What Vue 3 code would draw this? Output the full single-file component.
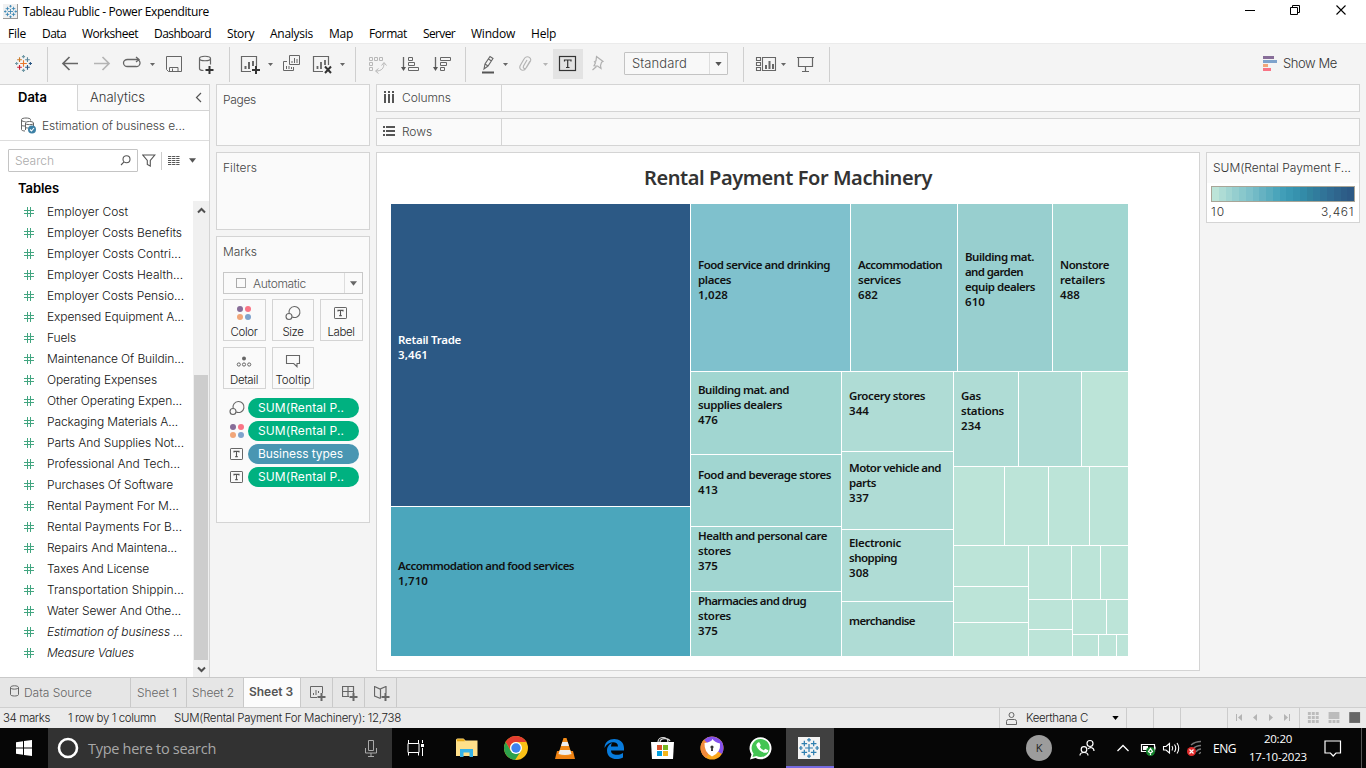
<script setup>
const vFit = {
  mounted(el, { value }) {
    if (!value) return
    const natural = el.getBoundingClientRect().width
    const count = el.textContent.trim().length
    el.style.letterSpacing = `${(value - natural) / count}px`
  },
}

const menus = [
  ['File', 18], ['Data', 24], ['Worksheet', 56], ['Dashboard', 57], ['Story', 27], ['Analysis', 43],
  ['Map', 24], ['Format', 38], ['Server', 32], ['Window', 44], ['Help', 25],
]

const fields = [
  ['Employer Cost', 81], ['Employer Costs Benefits', 135], ['Employer Costs Contri...', 134],
  ['Employer Costs Health...', 136], ['Employer Costs Pensio...', 137], ['Expensed Equipment A...', 137],
  ['Fuels', 29], ['Maintenance Of Buildin...', 137], ['Operating Expenses', 110], ['Other Operating Expen...', 135],
  ['Packaging Materials A...', 131], ['Parts And Supplies Not...', 137], ['Professional And Tech...', 133],
  ['Purchases Of Software', 126], ['Rental Payment For M...', 132], ['Rental Payments For B...', 135],
  ['Repairs And Maintena...', 130], ['Taxes And License', 102], ['Transportation Shippin...', 137],
  ['Water Sewer And Othe...', 134], ['Estimation of business ...', 136, true], ['Measure Values', 87, true],
]

const buttons = [
  ['Color', 27, 'color'], ['Size', 21, 'size'], ['Label', 27, 'label'], ['Detail', 28, 'detail'], ['Tooltip', 35, 'tooltip'],
]
const pills = [
  ['SUM(Rental P..', 86, 'size', 'green'], ['SUM(Rental P..', 86, 'color', 'green'],
  ['Business types', 85, 'label', 'blue'], ['SUM(Rental P..', 86, 'label', 'green'],
]

// left, top, right, bottom, fill, label offset, label lines
const tiles = [
  [0, 0, 300, 303, '#2c5985', 128, [['Retail Trade', 63], ['3,461', 30]], true],
  [0, 303, 300, 453, '#4ba6bc', 51, [['Accommodation and food services', 176], ['1,710', 30]]],
  [300, 0, 460, 168, '#7fc1cd', 53, [['Food service and drinking', 132], ['places', 33], ['1,028', 30]]],
  [460, 0, 567, 168, '#92cccf', 53, [['Accommodation', 84], ['services', 43], ['682', 20]]],
  [567, 0, 662, 168, '#98cfcf', 45, [['Building mat.', 69], ['and garden', 58], ['equip dealers', 70], ['610', 20]]],
  [662, 0, 738, 168, '#a1d6d1', 53, [['Nonstore', 49], ['retailers', 45], ['488', 20]]],
  [300, 168, 451, 251, '#a1d6d1', 10, [['Building mat. and', 91], ['supplies dealers', 84], ['476', 20]]],
  [300, 251, 451, 323, '#a1d6d1', 12, [['Food and beverage stores', 133], ['413', 20]]],
  [300, 323, 451, 388, '#a1d6d1', 1, [['Health and personal care', 129], ['stores', 33], ['375', 20]]],
  [300, 388, 451, 453, '#a1d6d1', 1, [['Pharmacies and drug', 108], ['stores', 33], ['375', 20]]],
  [451, 168, 563, 248, '#afdcd5', 16, [['Grocery stores', 76], ['344', 20]]],
  [451, 248, 563, 326, '#afdcd5', 8, [['Motor vehicle and', 92], ['parts', 27], ['337', 20]]],
  [451, 326, 563, 398, '#afdcd5', 5, [['Electronic', 52], ['shopping', 48], ['308', 20]]],
  [451, 398, 563, 453, '#afdcd5', 11, [['merchandise', 66]]],
  [563, 168, 628, 263, '#afdcd5', 16, [['Gas', 20], ['stations', 43], ['234', 20]]],
  [628, 168, 691, 263, '#afdcd5'],
  [691, 168, 738, 263], [563, 263, 614, 342], [614, 263, 658, 342], [658, 263, 699, 342], [699, 263, 738, 342],
  [563, 342, 638, 383], [563, 383, 638, 419], [563, 419, 638, 453],
  [638, 342, 681, 396], [681, 342, 710, 396], [710, 342, 738, 396],
  [638, 396, 682, 426], [638, 426, 682, 453],
  [682, 396, 716, 431], [716, 396, 738, 431],
  [682, 431, 708, 453], [708, 431, 726, 453], [726, 431, 738, 453],
]
const linesOf = (a, b) => [...new Set(tiles.flatMap((t) => [t[a], t[b]]))].sort((p, q) => p - q)
const xs = linesOf(0, 2)
const ys = linesOf(1, 3)
const tracks = (l) => l.slice(1).map((v, i) => `${v - l[i]}px`).join(' ')
const mapStyle = { gridTemplateColumns: tracks(xs), gridTemplateRows: tracks(ys) }
const tileStyle = (t) => ({
  gridColumn: `${xs.indexOf(t[0]) + 1} / ${xs.indexOf(t[2]) + 1}`,
  gridRow: `${ys.indexOf(t[1]) + 1} / ${ys.indexOf(t[3]) + 1}`,
  backgroundColor: t[4] || '#bce4d8',
  paddingTop: `${t[5] || 0}px`,
})

const ramp = ['#bce4d8', '#aedcd5', '#a1d5d2', '#95cecf', '#89c8cc', '#7ec1ca', '#72bac6', '#66b2c2', '#59acbe', '#4ba5bb',
  '#419eb8', '#3a98b3', '#3692ae', '#338ba8', '#32839f', '#317c9d', '#317498', '#306c93', '#2f658d', '#2d5e88', '#2c5985']
</script>

<template>
  <div class="window">
    <svg class="defs" width="0" height="0">
      <symbol id="i-color" viewBox="0 0 16 16">
        <circle cx="4" cy="4" r="3" fill="#876d98" /><circle cx="12" cy="4" r="3" fill="#f97485" />
        <circle cx="4" cy="12" r="3" fill="#f1a679" /><circle cx="12" cy="12" r="3" fill="#7fa3cc" />
      </symbol>
      <symbol id="i-size" viewBox="0 0 16 16">
        <g fill="none" stroke="#666" stroke-width="1.1"><path d="M4.2 8.5A5.5 5.5 0 1 1 7.2 12" /><circle cx="4" cy="11.5" r="3" /></g>
      </symbol>
      <symbol id="i-label" viewBox="0 0 16 16">
        <rect x="1.5" y="2.5" width="12" height="11" rx=".6" fill="none" stroke="#666" />
        <path d="M5 6.6V5.4h5v1.2M7.5 5.5v5M6.2 10.6h2.6" fill="none" stroke="#555" stroke-width="1.1" />
      </symbol>
      <symbol id="i-detail" viewBox="0 0 16 16">
        <circle cx="8" cy="5.5" r="2" fill="#666" /><g fill="none" stroke="#666"><circle cx="2.8" cy="11.5" r="1.6" /><circle cx="8" cy="11.5" r="1.6" /><circle cx="13.2" cy="11.5" r="1.6" /></g>
      </symbol>
      <symbol id="i-tooltip" viewBox="0 0 16 16">
        <path d="M1.5 2.5h13v8h-2.5v3.2l-3.3-3.2H1.5z" fill="none" stroke="#666" stroke-width="1.1" />
      </symbol>
      <symbol id="i-hash" viewBox="0 0 12 12">
        <path d="M4.500 1v10M7.500 1v10M1 4.500h10M1 7.500h10" stroke="#42a580" />
      </symbol>
      <symbol id="i-down" viewBox="0 0 8 5"><path d="M0 0h8L4 5z" /></symbol>
      <symbol id="i-tableau" viewBox="0 0 18 18">
        <path class="c1" d="M9 5.5v7M5.5 9h7" /><path class="c2" d="M4.8 2.5v5M2.3 5h5" /><path class="c3" d="M13.2 10.5v5M10.7 13h5" />
        <path class="c4" d="M13.2 2.5v5M10.7 5h5" /><path class="c5" d="M4.8 10.5v5M2.3 13h5" />
        <path class="c6" d="M9 0v3.4M7.3 1.7h3.4M9 14.6V18M7.3 16.3h3.4M1.7 7.3v3.4M0 9h3.4" /><path class="c3" d="M16.3 7.3v3.4M14.6 9H18" />
      </symbol>
    </svg>

    <header class="title">
      <span class="appicon"><svg class="mono" width="13" height="13"><use href="#i-tableau" /></svg></span>
      <span v-fit="186">Tableau Public - Power Expenditure</span>
      <svg class="controls" width="110" height="22" viewBox="1240 0 110 22" fill="none" stroke="#000">
        <path d="M1245 10.5h10M1290.5 7.5h7v7h-7zM1292.500 7.500v-2h7v7h-2" /><path d="M1336.500 5.500l9 9M1345.500 5.500l-9 9" stroke-width="1.100" />
      </svg>
    </header>

    <nav class="menu"><span v-for="m in menus" :key="m[0]" v-fit="m[1]">{{ m[0] }}</span></nav>

    <div class="toolbar">
      <span class="logo"><svg class="multi" width="17" height="17"><use href="#i-tableau" /></svg></span>
      <i class="sep"></i>
      <svg width="181" height="41" viewBox="48 43 181 41" fill="none" stroke="#666">
        <path d="M78 63.500H63M69.500 57l-6.500 6.500 6.500 6.500" stroke-width="1.700" />
        <path d="M94 63.500h15M102.500 57l6.500 6.500-6.500 6.500" stroke="#b4b4b4" stroke-width="1.700" />
        <path d="M133 59.500h-5.500a4 3.500 0 0 0 0 7h8.500a3.500 3.500 0 0 0 1-7M131 59.500h7M136 57l3 2.500-3 2.500" stroke-width="1.300" />
        <path d="M150 63h5l-2.500 3z" fill="#666" stroke="none" />
        <path d="M166.500 56.500h15v15h-13l-2-2zM169.500 71.500v-4h8.500v4M172.500 71v-2.500" />
        <path d="M199.500 58.500v10c0 1.500 2 2 4 2M210.500 58.500v6M199.500 58.500c0-3 11-3 11 0s-11 3-11 0" stroke-width="1.200" />
        <path d="M209.500 66v8M205.500 70h8" stroke="#333" stroke-width="2" />
      </svg>
      <i class="sep"></i>
      <svg width="125" height="41" viewBox="230 43 125 41" fill="none" stroke="#666">
        <path d="M251 71.500h-9.500v-15h15V66" stroke-width="1.200" /><path d="M245.500 69v-3M249 69v-7M253 66v-5" stroke-width="2" />
        <path d="M256 66v8M252 70h8" stroke="#333" stroke-width="2" /><path d="M268 63h5l-2.500 3zM340 63h5l-2.500 3z" fill="#666" stroke="none" />
        <path d="M289.500 55.500h10v9h-10zM287 61.500h-3.500v9h10V67M292 63v-2M294.500 63v-5M297 63v-4M286.500 69v-3M289 69v-3M291.500 69v-2" />
        <path d="M323 71.500h-9.500v-15h15V65" stroke-width="1.200" /><path d="M317.500 69v-3M321 69v-7M325 65v-5" stroke-width="1.800" />
        <path d="M325 66.500l6 6.500M331 66.500l-6 6.500" stroke="#333" stroke-width="2" />
      </svg>
      <i class="sep"></i>
      <svg width="109" height="41" viewBox="356 43 109 41" fill="none" stroke="#666">
        <path d="M369.500 57.500h3v3h-3zM374.500 57.500h3v3h-3zM379.500 57.500h3v3h-3zM369.500 62.500h3v3h-3zM369.500 67.500h3v3h-3zM384 63c0 5-2 8-8 8M381.500 65.500l2.500-3 2.500 3M378.500 68.500l-3 2.500 3 2.500" stroke="#b8b8b8" />
        <path d="M403.500 57v12M435.500 57v12" stroke-width="1.300" /><path d="M401 67h5l-2.500 4zM433 67h5l-2.500 4z" fill="#555" stroke="none" />
        <path d="M408.500 57.500h4v3h-4zM408.500 62.500h6v3h-6zM408.500 67.500h10v3h-10zM440.500 57.500h10v3h-10zM440.500 62.500h6v3h-6zM440.500 67.500h4v3h-4z" />
      </svg>
      <i class="sep"></i>
      <div class="tseg">
        <svg width="158" height="41" viewBox="466 43 158 41" fill="none" stroke="#666">
          <rect x="553" y="49" width="30" height="30" fill="#e3e3e3" stroke="none" />
          <path d="M484 69l1-5 5-7.500 3 2-5 7.500zM485 64l3 2M488.500 59l3 2" stroke-width="1.100" /><path d="M482 72.500h12" stroke-width="2" stroke="#555" />
          <path d="M503 63h5l-2.500 3z" fill="#666" stroke="none" /><path d="M543 63h5l-2.500 3z" fill="#b5b5b5" stroke="none" />
          <path d="M530 61l-4 7c-2 4-7.500 2-6-2l4-7c2-4 8-2 6.500 2l-4 6.500c-1.500 2-4 1-3-1.500l3.500-6" stroke="#b5b5b5" stroke-width="1.200" />
          <rect x="559.500" y="56.500" width="16" height="14" stroke="#333" stroke-width="1.200" />
          <path d="M564.500 61.500v-1.500h6.500v1.500M567.700 60v7.500M566 67.500h3.500" stroke="#333" stroke-width="1.200" />
          <path d="M596.500 56.500l6.500 5-1.500.8-1 3.200.5 3-3.500-2.500-3.500-.2 1.500-3-1-1 1.500-1zM596.500 66.500l-4 3.500" stroke="#b0b0b0" stroke-width="1.200" />
        </svg>
        <div class="fitbox"><span v-fit="55">Standard</span><b><svg width="7" height="4" fill="#555"><use href="#i-down" /></svg></b></div>
      </div>
      <i class="sep"></i>
      <svg width="85" height="41" viewBox="744 43 85 41" fill="none" stroke="#666">
        <path d="M756.500 57.500h4v3h-4zM756.500 62.500h4v3h-4zM756.500 67.500h4v3h-4zM762.500 57.500h13v13h-13z" stroke-width="1.100" />
        <path d="M766 69v-4M769.500 69v-8M773 69v-5" stroke-width="2" /><path d="M781 63h5l-2.500 3z" fill="#666" stroke="none" />
        <path d="M797 57.500h17M798.500 58v8.500h14V58M805.500 66.500v5M802 71.500h7" stroke-width="1.200" />
      </svg>
      <i class="sep"></i>
      <div class="showme">
        <svg width="14" height="15"><path d="M0 0h11v3H0z" fill="#876d98" /><path d="M0 4h14v3H0z" fill="#7fa3cc" /><path d="M0 8h5v3H0z" fill="#f1a679" /><path d="M0 12h8v3H0z" fill="#f97485" /></svg>
        <span v-fit="54">Show Me</span>
      </div>
    </div>

    <main class="main">
      <aside class="side">
        <div class="sidetabs">
          <div class="on"><span v-fit="29">Data</span></div>
          <div class="off"><span v-fit="55">Analytics</span><svg width="7" height="11" fill="none" stroke="#555" stroke-width="1.200"><path d="M6 1L1.500 5.500 6 10" /></svg></div>
        </div>
        <div class="source">
          <svg width="17" height="17" fill="none" stroke="#666">
            <path d="M1.500 12.500v-10c0-2 9-2 9 0v1M1.500 3c0 1.500 3 1.700 4 1.500M1.500 12.500c0 1 2 1.500 3.500 1.500M5.500 13V6c0-2 8-2 8 0v3M5.500 6.500c0 1.500 8 1.500 8 0M1.500 8c0 1 2 1 4 1M5.500 10c0 1 2 1 3 1" /><circle cx="12" cy="12.500" r="4" fill="#3c80a5" stroke="none" /><path d="M10 12.500l1.500 1.500 2.500-3" stroke="#fff" stroke-width="1.100" />
          </svg>
          <span v-fit="143">Estimation of business e...</span>
        </div>
        <div class="find">
          <div class="input"><span v-fit="39">Search</span><svg width="11" height="11" fill="none" stroke="#555" stroke-width="1.100"><circle cx="6.500" cy="4.200" r="3.500" /><path d="M4 6.800L1 10" /></svg></div>
          <svg width="14" height="13" fill="none" stroke="#555" stroke-width="1.100"><path d="M.8 1h12L8.300 6.500V12l-3-1.500v-4z" /></svg>
          <i></i>
          <svg width="12" height="10" stroke="#555"><path d="M0 .5h12M0 2.500h12M0 4.500h12M0 6.500h12M0 8.500h12" stroke-dasharray="3.300 .8" /></svg>
          <svg class="dn" width="7" height="5" fill="#555"><use href="#i-down" /></svg>
        </div>
        <h3 class="tables"><span v-fit="41">Tables</span></h3>
        <div class="list">
          <div class="fields">
            <div v-for="f in fields" :key="f[0]" class="field" :class="{ em: f[2] }"><svg width="12" height="12"><use href="#i-hash" /></svg><span v-fit="f[1]">{{ f[0] }}</span></div>
          </div>
          <div class="scroll">
            <svg width="9" height="7" fill="none" stroke="#505050" stroke-width="2"><path d="M1 5.500L4.500 2 8 5.500" /></svg>
            <i></i>
            <svg width="9" height="7" fill="none" stroke="#505050" stroke-width="2"><path d="M1 1.500L4.500 5 8 1.500" /></svg>
          </div>
        </div>
      </aside>

      <section class="cards">
        <div class="card pages"><span v-fit="33">Pages</span></div>
        <div class="card filters"><span v-fit="34">Filters</span></div>
        <div class="card marks">
          <span v-fit="34">Marks</span>
          <div class="auto"><em></em><span v-fit="53">Automatic</span><b><svg width="7" height="5" fill="#666"><use href="#i-down" /></svg></b></div>
          <div class="grid">
            <div v-for="b in buttons" :key="b[0]" class="btn"><svg width="16" height="16"><use :href="'#i-' + b[2]" /></svg><span v-fit="b[1]">{{ b[0] }}</span></div>
          </div>
          <div class="pills">
            <div v-for="(p, i) in pills" :key="i" class="pillrow"><svg width="16" height="16"><use :href="'#i-' + p[2]" /></svg><div class="pill" :class="p[3]"><span v-fit="p[1]">{{ p[0] }}</span></div></div>
          </div>
        </div>
      </section>

      <section class="work">
        <div class="shelf"><label><svg width="12" height="12" fill="#555"><path d="M1 0h2v2H1zM5 0h2v2H5zM9 0h2v2H9zM1 3h2v9H1zM5 3h2v9H5zM9 3h2v9H9z" /></svg><span v-fit="49">Columns</span></label></div>
        <div class="shelf"><label><svg width="12" height="12" fill="#555"><path d="M0 1h2v2H0zM0 5h2v2H0zM0 9h2v2H0zM3 1h9v2H3zM3 5h9v2H3zM3 9h9v2H3z" /></svg><span v-fit="30">Rows</span></label></div>
        <div class="viewrow">
          <article class="view">
            <h1><span v-fit="288">Rental Payment For Machinery</span></h1>
            <div class="treemap" :style="mapStyle">
              <div v-for="(t, i) in tiles" :key="i" class="tile" :class="{ light: t[7] }" :style="tileStyle(t)">
                <div v-for="(l, j) in t[6]" :key="j" class="line"><span v-fit="l[1]">{{ l[0] }}</span></div>
              </div>
            </div>
          </article>
          <div class="legend">
            <div class="lt"><span v-fit="138">SUM(Rental Payment F...</span></div>
            <div class="ramp"><i v-for="c in ramp" :key="c" :style="{ backgroundColor: c }"></i></div>
            <div class="ends"><span v-fit="14">10</span><span v-fit="33">3,461</span></div>
          </div>
        </div>
      </section>
    </main>

    <div class="tabs">
      <div class="tab ds"><svg width="9" height="12" fill="none" stroke="#666"><path d="M.5 2.500v7c0 2 8 2 8 0v-7c0-2.300-8-2.300-8 0s8 2 8 0" /></svg><span v-fit="68">Data Source</span></div>
      <div class="tab"><span v-fit="40">Sheet 1</span></div>
      <div class="tab second"><span v-fit="42">Sheet 2</span></div>
      <div class="tab cur"><span v-fit="44">Sheet 3</span></div>
      <div class="tab ic"><svg width="16" height="16" fill="none" stroke="#666"><path d="M7 11.500H.5V.5h12V7M3.500 9V7M6 9V4M8.500 7V5" /><path d="M11.500 7v8M7.500 11h8" stroke-width="2" /></svg></div>
      <div class="tab ic"><svg width="16" height="16" fill="none" stroke="#666"><path d="M7 10.500H.5V.5h11V7M.5 5.500h11M6 .5v10" stroke-width="1.200" /><path d="M11.500 7v8M7.500 11h8" stroke-width="2" /></svg></div>
      <div class="tab ic"><svg width="16" height="16" fill="none" stroke="#666"><path d="M6.500 12.500L.5 10V.5L6 3 12 .5V7M6.500 3v9.500" stroke-width="1.200" /><path d="M11.500 7v8M7.500 11h8" stroke-width="2" /></svg></div>
    </div>

    <footer class="status">
      <span v-fit="47">34 marks</span><span v-fit="88">1 row by 1 column</span><span v-fit="227">SUM(Rental Payment For Machinery): 12,738</span>
      <div class="user"><svg width="11" height="13" fill="none" stroke="#666"><circle cx="5.500" cy="3" r="2.500" /><path d="M.5 12.500v-3q0-2 2-2h6q2 0 2 2v3z" /></svg><span v-fit="62">Keerthana C</span><svg width="7" height="4" fill="#000"><use href="#i-down" /></svg></div>
      <i></i><i></i><i class="wide"></i>
      <svg width="71" height="20" viewBox="1228 708 71 20" fill="#b4b4b4"><path d="M1236 714h1v7h-1zM1242 714v7l-4-3.500zM1257 714v7l-4-3.500zM1269 714v7l4-3.500zM1284 714v7l4-3.500zM1289 714h1v7h-1z" /></svg>
      <svg class="modes" width="67" height="20" viewBox="1299 708 67 20" fill="#bcbcbc">
        <path d="M1307 712h3v3h-3zM1311 712h3v3h-3zM1315 712h3v3h-3zM1307 716h3v3h-3zM1311 716h3v3h-3zM1315 716h3v3h-3zM1307 720h3v3h-3zM1311 720h3v3h-3zM1315 720h3v3h-3zM1328 712h11v7h-11zM1328 720h3v3h-3zM1332 720h3v3h-3zM1336 720h3v3h-3z" /><path d="M1349 712h11v11h-11z" fill="#666" />
      </svg>
    </footer>

    <div class="taskbar">
      <div class="start"><svg width="17" height="16" fill="#fff"><path d="M0 2.300L7 1.300v6.200H0zM8 1.100L16 0v7.500H8zM0 8.500h7v6.200l-7-1zM8 8.500h8V16l-8-1.100z" /></svg></div>
      <div class="cortana">
        <svg width="22" height="22" fill="none" stroke="#fff" stroke-width="2.600"><circle cx="11" cy="11" r="9" /></svg>
        <span v-fit="128">Type here to search</span>
        <svg width="12" height="17" fill="none" stroke="#aaa"><path d="M3.500 .5h5v10h-5zM.5 8v5h11V8M6 13v3.500M3 16.500h6" /></svg>
      </div>
      <svg width="394" height="40" viewBox="392 728 394 40" fill="none">
        <path d="M408 743.500h11M408.500 740v3.500M418.500 740v3.500M408 752.500h11v-9h-11zM408.500 752.500v3M418.500 752.500v3M422.500 740v3M422.500 748v8" stroke="#fff" /><path d="M421 744h3v3h-3z" fill="#fff" />
        <path d="M456 740q0-1.500 1.500-1.500h6l2 2h12V756h-21.500z" fill="#ffe08a" /><path d="M457 739.300h7l1 2h-8z" fill="#e6a817" /><path d="M460 757v-8h13v8h-3.500v-4.500h-6V757z" fill="#35b3e8" />
        <circle cx="516" cy="748" r="12" fill="#fbc116" /><path d="M505.600 742A12 12 0 0 1 526.400 742H516a6 6 0 0 0-5.200 9z" fill="#e23c30" /><path d="M505.600 742A12 12 0 0 0 515 760l6-9-5 3-5.200-3z" fill="#2da14c" /><circle cx="516" cy="748" r="6" fill="#fff" /><circle cx="516" cy="748" r="4.700" fill="#3c83ef" />
        <path d="M557 751h16l2 8h-20z" fill="#ee8112" /><path d="M563.500 738h3L572 755q-7 2.500-14 0z" fill="#f28a17" /><path d="M562.300 742h5.400l1.300 4h-8zM559.800 750h10.400l1.300 4q-6.500 2-13 0z" fill="#eee" />
        <path d="M604.500 748c0-12 19.500-12 19.500 0v2.500h-13c0 5 7.500 5.500 12 2.500v4.500c-7 3.500-16 1-16-7 0-4 2.500-6.500 5-7.500q-1 1.500-1 3.500h7c0-5.500-9-6-13.500 1.500z" fill="#087bdc" />
        <path d="M651 742h23l-1 17h-21z" fill="#fff" /><path d="M658 742c0-6 10-6 10 0M660 742c0-3.500 8-5 10-1" stroke="#ddd" stroke-width="1.200" /><path d="M657 745h5v5h-5z" fill="#d8532c" /><path d="M663 745h5v5h-5z" fill="#79b622" /><path d="M657 751h5v5h-5z" fill="#00a0e0" /><path d="M663 751h5v5h-5z" fill="#f5b51a" />
        <circle cx="712" cy="748" r="11.500" fill="#f9a51b" /><path d="M704 740A11.500 11.500 0 0 1 723.500 748Q723.500 751 722 754L712 748z" fill="#8450ec" /><path d="M704 740a11.500 11.500 0 0 0 2 18l6-10z" fill="#f08a3c" /><path d="M704.500 743q7-1 8-4 2 3 7.500 4.500 1 9-8 13-8-4-7.500-13.500z" fill="#fff" /><circle cx="712" cy="747" r="1.600" fill="#333" /><path d="M711.300 747h1.400l.3 4h-2z" fill="#333" />
        <path d="M750 759.500l1.500-5a11 11 0 1 1 4 3.500z" fill="#fff" /><path d="M752.500 757l1-3.500a9 9 0 1 1 3 2.500z" fill="#43c553" /><path d="M757.500 743q1.500-1.500 2.500.5l.8 2-1 1.500q1.500 2.500 4 3.200l1.500-1.500 3 1.500c0 2.500-2.500 3-4 2.500q-6-1.500-8-7.200-.2-1.500 1.200-2.500z" fill="#fff" />
      </svg>
      <div class="active"><span><svg class="mono" width="20" height="20"><use href="#i-tableau" /></svg></span></div>
      <div class="tray">
        <span class="avatar">K</span>
        <svg width="140" height="40" viewBox="1066 728 140 40" fill="none" stroke="#fff">
          <g stroke-width="1.200"><circle cx="1090" cy="743.500" r="3" /><circle cx="1084" cy="749.500" r="2.800" /><path d="M1080 755.500c0-4 8-4 8 0M1088 749c2-2.500 6-1.500 6 2" /></g>
          <path d="M1117.500 751l5.500-5.500 5.500 5.500" stroke-width="1.300" />
          <path d="M1141.500 744.500h13v7h-13zM1155 746.500v3" stroke-width="1.200" /><path d="M1143 746h5v4h-5z" fill="#fff" stroke="none" /><circle cx="1150.500" cy="751.500" r="4.500" fill="#14832c" stroke="none" /><path d="M1150.500 755v-3M1148.500 751.500l2-3 2 3-2 1.500z" stroke-width="1.200" />
          <path d="M1163.500 746.500h2.500l3.500-3v9.500l-3.500-3h-2.500zM1172 746q1.500 2 0 4.500M1174.500 744.500q2.500 3.500 0 7.500M1177 743q3.500 5 0 10.500" stroke-width="1.100" />
          <path d="M1191 745q4-3.500 10-3.500M1193 749q3-3.500 8-3.500M1196 752q2-3 5-3M1199 754q1-1.500 2-1.500" stroke="#777" stroke-width="1.300" /><circle cx="1191.500" cy="751.500" r="4.500" fill="#e12c2c" stroke="none" /><path d="M1189.500 749.500l4 4M1193.500 749.500l-4 4" stroke-width="1.200" />
        </svg>
        <span class="eng" v-fit="23">ENG</span>
        <div class="clock"><div><span v-fit="28">20:20</span></div><div><span v-fit="58">17-10-2023</span></div></div>
        <svg class="note" width="18" height="17" fill="none" stroke="#fff" stroke-width="1.200"><path d="M1 1h15.500v12H12l-2.800 3-2.800-3H1z" /></svg>
        <i class="peek"></i>
      </div>
    </div>
  </div>
</template>

<style>
html, body { margin: 0; overflow: hidden; }
</style>

<style scoped>
.window { width: 1366px; height: 768px; display: flex; flex-direction: column; background: #f4f4f4; font: 350 12px/15px Inter, "Open Sans", sans-serif; color: #333; overflow: hidden; }
.window * { box-sizing: border-box; }
svg { display: block; flex: none; }
.defs { position: absolute; }
span { display: inline-block; white-space: pre; flex: none; }
.mono { stroke: #2f7fb0; stroke-width: 1.1; }
.multi { stroke-width: 1.2; --a: #e8762b; --b: #c97b2b; --c: #2c5985; --d: #5b879b; --e: #c72035; --f: #7199a6; }
.c1 { stroke: var(--a, #2f7fb0); } .c2 { stroke: var(--b, #2f7fb0); } .c3 { stroke: var(--c, #2f7fb0); }
.c4 { stroke: var(--d, #2f7fb0); } .c5 { stroke: var(--e, #2f7fb0); } .c6 { stroke: var(--f, #2f7fb0); }

.title { height: 22px; background: #fff; display: flex; align-items: center; padding-left: 3px; color: #000; font-family: "Open Sans", "Noto Sans", sans-serif; font-weight: 400; }
.appicon { width: 15px; height: 15px; margin-right: 5px; padding: 1px; background: #f1f1f1; border-right: 1px solid #999; border-bottom: 1px solid #999; }
.controls { margin-left: auto; margin-right: 16px; }
.menu { height: 21px; background: #fff; display: flex; align-items: center; gap: 16px; padding: 2px 0 0 8px; color: #000; font-family: "Open Sans", "Noto Sans", sans-serif; font-weight: 400; }
.toolbar { height: 41px; display: flex; box-shadow: inset 0 1px #ebebeb; }
.logo { width: 47px; padding: 12px 0 0 15px; }
.sep { width: 1px; height: 35px; margin-top: 4px; background: #cfcfcf; }
.tseg { width: 277px; display: flex; }
.fitbox { width: 104px; height: 23px; margin-top: 9px; border: 1px solid #c3c3c3; border-radius: 1px; background: #f8f8f8; display: flex; align-items: center; padding-left: 7px; font-size: 13px; color: #444; }
.fitbox b { margin-left: auto; width: 18px; height: 100%; border-left: 1px solid #ddd; display: flex; align-items: center; justify-content: center; }
.showme { margin-left: auto; padding-right: 29px; display: flex; align-items: center; gap: 6px; font-size: 13px; }

.main { height: 593px; display: flex; }
.side { width: 210px; background: #fff; border-right: 1px solid #d4d4d4; border-top: 1px solid #d4d4d4; margin-right: 6px; display: flex; flex-direction: column; }
.sidetabs { height: 26px; display: flex; font-size: 13px; color: #333; }
.on { width: 77px; padding: 5px 0 0 18px; font-weight: 600; color: #000; }
.off { flex: 1; border-left: 1px solid #d4d4d4; border-bottom: 1px solid #d4d4d4; background: #fafafa; display: flex; justify-content: space-between; align-items: center; padding: 0 7px 0 12px; }
.source { height: 30px; border-bottom: 1px solid #ddd; display: flex; align-items: center; padding-left: 20px; gap: 5px; color: #444; }
.find { height: 39px; display: flex; align-items: center; padding-left: 8px; }
.input { width: 130px; height: 23px; border: 1px solid #c4c4c4; border-radius: 1px; display: flex; align-items: center; justify-content: space-between; padding: 0 6px; color: #aaa; margin-right: 4px; }
.find i { width: 1px; height: 18px; background: #ccc; margin: 0 6px 0 5px; }
.find .dn { margin-left: 9px; }
.tables { margin: 0; height: 21px; padding: 1px 0 0 18px; font-size: 13px; font-weight: 600; color: #000; }
.list { flex: 1; display: flex; justify-content: space-between; }
.fields { padding-left: 23px; }
.field { height: 21px; display: flex; align-items: center; gap: 12px; color: #111; }
.em { font-style: italic; }
.scroll { width: 16px; background: #f0f0f0; display: flex; flex-direction: column; align-items: center; padding: 6px 0 4px; }
.scroll i { width: 14px; height: 285px; margin-top: auto; margin-bottom: 6px; background: #cdcdcd; }

.cards { width: 154px; margin-right: 6px; display: flex; flex-direction: column; gap: 6px; }
.card { border: 1px solid #d4d4d4; background: #fafafa; padding: 7px 6px 0; color: #444; }
.pages { height: 62px; } .filters { height: 78px; } .marks { height: 287px; }
.auto { width: 140px; height: 22px; margin-top: 13px; border: 1px solid #c8c8c8; display: flex; align-items: center; padding-left: 12px; gap: 7px; color: #555; }
.auto em { width: 10px; height: 10px; border: 1px solid #aaa; }
.auto b { margin-left: auto; width: 18px; height: 100%; border-left: 1px solid #ddd; display: flex; align-items: center; justify-content: center; }
.grid { margin-top: 5px; display: grid; grid-template-columns: 43px 42px 43px; gap: 6px; }
.btn { height: 42px; border: 1px solid #d4d4d4; display: flex; flex-direction: column; align-items: center; padding: 5px 1px 0 0; gap: 4px; font-size: 11.5px; color: #222; }
.btn:nth-child(3n + 2) { padding-right: 0; }
.pills { margin-top: 9px; display: flex; flex-direction: column; gap: 3px; padding-left: 6px; }
.pillrow { height: 20px; display: flex; align-items: center; gap: 3px; }
.pill { width: 111px; height: 20px; border-radius: 10px; color: #fff; padding: 2px 0 0 10px; font-weight: 400; }
.green { background: #00b180; } .blue { background: #4996b2; }

.work { width: 984px; display: flex; flex-direction: column; gap: 6px; }
.shelf { height: 28px; border: 1px solid #d4d4d4; background: #fafafa; }
.shelf label { width: 125px; height: 26px; border-right: 1px solid #d4d4d4; display: flex; align-items: center; gap: 7px; padding: 0 0 2px 6px; color: #444; }
.viewrow { display: flex; gap: 6px; align-items: flex-start; }
.view { width: 824px; height: 519px; background: #fff; border: 1px solid #d4d4d4; }
.view h1 { margin: 0; height: 51px; text-align: center; font: 600 20px/50px "Noto Sans", sans-serif; color: #333; }
.treemap { display: grid; width: 738px; height: 453px; margin-left: 14px; font: 600 11.5px/15px "Noto Sans", sans-serif; color: #111; }
.tile { border-right: 1px solid #fff; border-bottom: 1px solid #fff; padding-left: 7px; min-width: 0; overflow: hidden; }
.line { height: 15px; }
.light { color: #fff; }
.legend { width: 154px; height: 71px; border: 1px solid #d4d4d4; background: #fff; color: #333; }
.lt { height: 30px; padding: 7px 0 0 6px; background: #fafafa; }
.ramp { margin: 3px 4px 0; height: 16px; border: 1px solid #a9a597; display: flex; }
.ramp i { flex: 1; }
.ends { display: flex; justify-content: space-between; padding: 2px 5px 0 4px; }

.tabs { height: 31px; background: #e6e6e6; border-top: 1px solid #c9c9c9; border-bottom: 1px solid #cfcfcf; display: flex; color: #666; }
.tab { width: 56px; border-right: 1px solid #c9c9c9; padding: 7px 0 0 6px; }
.ds { width: 131px; display: flex; gap: 5px; padding-left: 10px; }
.second { width: 57px; padding-left: 5px; }
.cur { width: 57px; background: #fcfcfc; font-weight: 600; color: #555; padding: 6px 0 0 5px; }
.ic { width: 32px; padding: 8px 0 0 9px; }
.status { height: 20px; background: #ebebeb; display: flex; align-items: center; padding-left: 3px; font-size: 11.5px; color: #222; }
.status > span { margin-right: 18px; }
.user { margin-left: auto; width: 128px; height: 20px; border-left: 1px solid #ccc; border-right: 1px solid #ccc; display: flex; align-items: center; padding: 0 7px 0 6px; }
.user span { margin: 0 auto 0 9px; }
.status i { width: 27px; height: 20px; border-right: 1px solid #ccc; }
.status .wide { width: 47px; }
.modes { border-left: 1px solid #ccc; }

.taskbar { height: 40px; background: #060606; display: flex; color: #fff; font-family: "Open Sans", "Noto Sans", sans-serif; font-weight: 400; }
.start { width: 48px; padding: 12px 0 0 16px; }
.cortana { width: 344px; background: #323232; display: flex; align-items: center; padding: 0 15px 0 9px; color: #a8a8a8; font-size: 14.5px; }
.cortana span { margin: 0 auto 0 9px; }
.active { width: 48px; background: #404040; border-bottom: 2px solid #756ae0; padding: 9px 0 0 12px; }
.active span { width: 22px; height: 22px; padding: 1px; background: #f4f4f4; }
.tray { margin-left: auto; width: 340px; display: flex; align-items: center; }
.avatar { width: 26px; height: 26px; border-radius: 50%; background: #9c9c9c; color: #222; font-size: 11px; line-height: 26px; text-align: center; margin-right: 14px; }
.eng { margin: 0 13px 0 7px; }
.clock { width: 58px; text-align: center; font-size: 11.5px; line-height: 18px; }
.note { margin-left: 17px; margin-top: 1px; }
.peek { width: 1px; height: 40px; margin-left: auto; margin-right: 4px; background: #555; }
</style>
